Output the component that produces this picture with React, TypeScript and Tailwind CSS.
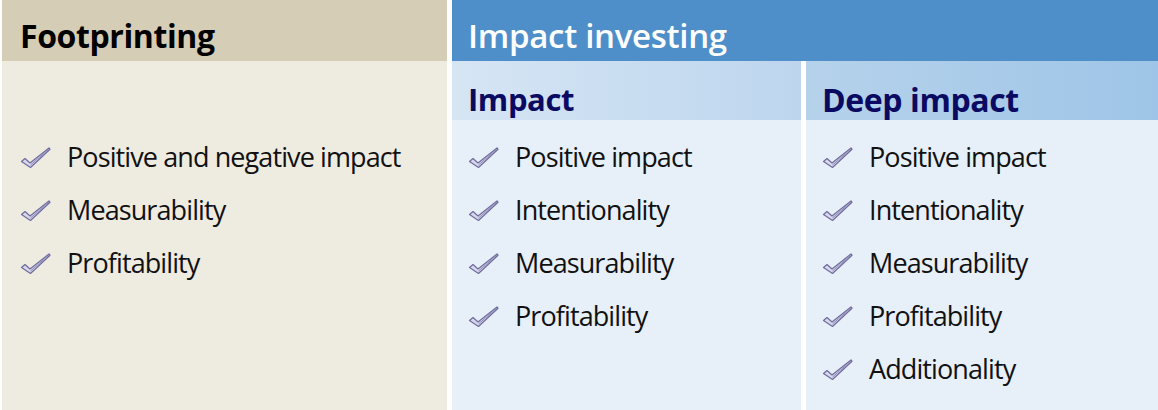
import React from "react";

const Check = () => (
  <svg width="32" height="24" viewBox="0 0 32 24" className="shrink-0">
    <path
      d="M1.5 15.5 L5 12.5 L10 17 L29 2 L30 3.2 L10.5 21.5 Z"
      fill="#d9d7ea"
      stroke="#6f6c9e"
      strokeWidth="1.2"
      strokeLinejoin="round"
    />
    <path d="M10.5 19 L28.5 3.5" stroke="#8f8cba" strokeWidth="1" />
  </svg>
);

function Item({ text }: { text: string }) {
  return (
    <li className="flex h-[53px] items-center gap-[15px]">
      <Check />
      <span className="text-[27px] tracking-[-0.9px] text-[#111]">{text}</span>
    </li>
  );
}

export default function App() {
  const font = { fontFamily: '"Open Sans", "Noto Sans", sans-serif' };
  return (
    <div className="flex h-[410px] w-[1158px] gap-[5px] bg-white pl-[2px]" style={font}>
      {/* Footprinting */}
      <div className="flex w-[445px] flex-col bg-[#eeebe1]">
        <div className="flex h-[61px] items-end bg-[#d5cdb5] px-[18px] pb-[1px]">
          <h2 className="text-[32px] font-bold tracking-[-0.4px] text-black">Footprinting</h2>
        </div>
        <ul className="px-[18px] pt-[70px]">
          <Item text="Positive and negative impact" />
          <Item text="Measurability" />
          <Item text="Profitability" />
        </ul>
      </div>

      {/* Impact investing */}
      <div className="flex flex-1 flex-col">
        <div className="flex h-[61px] items-end bg-[#4e8fca] px-[16px] pb-[1px]">
          <h2 className="text-[33px] font-semibold tracking-[-0.3px] text-white">Impact investing</h2>
        </div>
        <div className="flex flex-1 gap-[5px]">
          <div className="flex w-[349px] flex-col bg-[#e7eff8]">
            <div className="flex h-[59px] items-center bg-gradient-to-r from-[#d6e5f4] to-[#bdd6ee] px-[16px] pt-[18px]">
              <h3 className="text-[31px] font-bold tracking-[-0.4px] text-[#0a0a62]">Impact</h3>
            </div>
            <ul className="px-[16px] pt-[11px]">
              <Item text="Positive impact" />
              <Item text="Intentionality" />
              <Item text="Measurability" />
              <Item text="Profitability" />
            </ul>
          </div>
          <div className="flex flex-1 flex-col bg-[#e7eff8]">
            <div className="flex h-[59px] items-center bg-gradient-to-r from-[#b6d2eb] to-[#9ec5e7] px-[16px] pt-[18px]">
              <h3 className="text-[32px] font-bold tracking-[-0.4px] text-[#0a0a62]">Deep impact</h3>
            </div>
            <ul className="px-[16px] pt-[11px]">
              <Item text="Positive impact" />
              <Item text="Intentionality" />
              <Item text="Measurability" />
              <Item text="Profitability" />
              <Item text="Additionality" />
            </ul>
          </div>
        </div>
      </div>
    </div>
  );
}
